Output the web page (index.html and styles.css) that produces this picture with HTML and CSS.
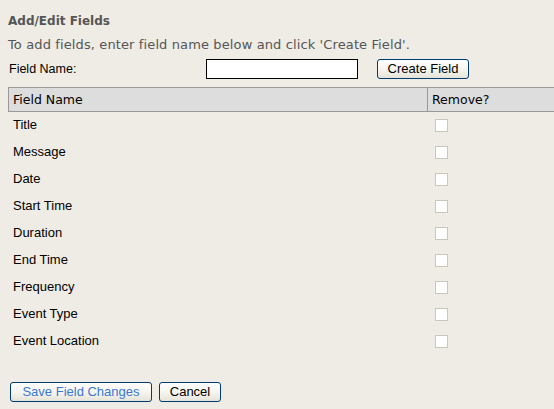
FILE: index.html
```html
<!DOCTYPE html>
<html>
<head>
<meta charset="utf-8">
<link rel="stylesheet" href="styles.css">
</head>
<body>
<div class="page">
  <h2 class="title">Add/Edit Fields</h2>
  <p class="intro">To add fields, enter field name below and click 'Create Field'.</p>
  <div class="form-row">
    <label class="form-label">Field Name:</label>
    <input class="text-input" type="text">
    <button class="btn btn-create">Create Field</button>
  </div>
  <div class="fields">
    <div class="head">
      <div class="cell-name">Field Name</div>
      <div class="cell-remove">Remove?</div>
    </div>
    <div class="row"><div class="cell-name">Title</div><div class="cell-check"><input class="check" type="checkbox" disabled></div></div>
    <div class="row"><div class="cell-name">Message</div><div class="cell-check"><input class="check" type="checkbox" disabled></div></div>
    <div class="row"><div class="cell-name">Date</div><div class="cell-check"><input class="check" type="checkbox" disabled></div></div>
    <div class="row"><div class="cell-name">Start Time</div><div class="cell-check"><input class="check" type="checkbox" disabled></div></div>
    <div class="row"><div class="cell-name">Duration</div><div class="cell-check"><input class="check" type="checkbox" disabled></div></div>
    <div class="row"><div class="cell-name">End Time</div><div class="cell-check"><input class="check" type="checkbox" disabled></div></div>
    <div class="row"><div class="cell-name">Frequency</div><div class="cell-check"><input class="check" type="checkbox" disabled></div></div>
    <div class="row"><div class="cell-name">Event Type</div><div class="cell-check"><input class="check" type="checkbox" disabled></div></div>
    <div class="row"><div class="cell-name">Event Location</div><div class="cell-check"><input class="check" type="checkbox" disabled></div></div>
  </div>
  <div class="actions">
    <button class="btn btn-save">Save Field Changes</button>
    <button class="btn btn-cancel">Cancel</button>
  </div>
</div>
</body>
</html>
```
FILE: styles.css
```css
html, body {
  margin: 0;
  padding: 0;
  background: #efece6;
  overflow: hidden;
}
.page {
  padding-left: 8px;
  font-family: "Liberation Sans", Arial, sans-serif;
  font-size: 13px;
  color: #000;
}
.title {
  margin: 13px 0 0 0;
  height: 16px;
  line-height: 16px;
  font-family: "DejaVu Sans", Verdana, sans-serif;
  font-size: 12px;
  font-weight: bold;
  color: #555;
}
.intro {
  margin: 8px 0 0 0;
  height: 16px;
  line-height: 16px;
  font-family: "DejaVu Sans", Verdana, sans-serif;
  font-size: 13px;
  letter-spacing: 0.12px;
  color: #555;
}
.form-row {
  margin-top: 6px;
  height: 20px;
  display: flex;
  align-items: center;
}
.form-label {
  width: 198px;
  padding-left: 1px;
  box-sizing: border-box;
  line-height: 20px;
  font-size: 12.5px;
}
.text-input {
  width: 152px;
  height: 20px;
  box-sizing: border-box;
  border: 1px solid #000;
  background: #fff;
  margin: 0;
  padding: 0 2px;
  font: inherit;
}
.btn {
  height: 20px;
  box-sizing: border-box;
  margin: 0;
  padding: 0;
  border: 1px solid #003c74;
  border-radius: 3px;
  background: linear-gradient(#ffffff 0%, #f6f5f0 50%, #e6e3d8 100%);
  font-family: "Liberation Sans", Arial, sans-serif;
  font-size: 13px;
  color: #000;
  line-height: 18px;
}
.btn-create {
  margin-left: 19px;
  width: 92px;
}
.fields {
  margin-top: 8px;
}
.head {
  display: grid;
  grid-template-columns: 419px 1fr;
  height: 25px;
  box-sizing: border-box;
  border-top: 1px solid #999;
  border-bottom: 1px solid #999;
  border-left: 1px solid #999;
  background: #dddddd;
  font-family: "DejaVu Sans", Verdana, sans-serif;
  font-size: 12.5px;
  line-height: 23px;
}
.head .cell-name {
  padding-left: 4px;
  border-right: 1px solid #999;
}
.cell-remove {
  padding-left: 4px;
}
.row {
  display: grid;
  grid-template-columns: 419px 1fr;
  height: 27px;
  align-items: center;
}
.row .cell-name {
  padding-left: 5px;
  line-height: 22px;
  padding-bottom: 2px;
}
.cell-check {
  padding-left: 8px;
  display: flex;
  align-items: center;
}
.check {
  appearance: none;
  -webkit-appearance: none;
  width: 13px;
  height: 13px;
  margin: 0;
  box-sizing: border-box;
  border: 1px solid #cac8bb;
  background: #fff;
}
.actions {
  margin-top: 27px;
  padding-left: 2px;
  display: flex;
  gap: 7px;
}
.btn-save {
  width: 142px;
  color: #3a78d6;
}
.btn-cancel {
  width: 62px;
}
```
